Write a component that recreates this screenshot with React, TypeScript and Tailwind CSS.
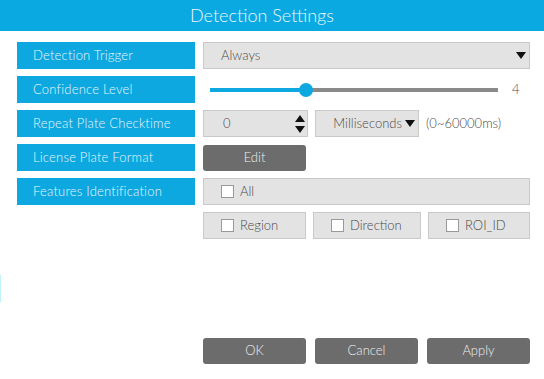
import React from "react";

const FONT = { fontFamily: '"Lato", "DejaVu Sans", sans-serif' };

function Label({ children }: { children: React.ReactNode }) {
  return (
    <div className="flex h-[27px] w-[178px] shrink-0 items-center bg-[#0ea8e0] pl-[16px] pt-[1px] text-[13px] font-light tracking-[0.2px] text-[#e6f6fc]">
      {children}
    </div>
  );
}

function Box({ className = "", children }: { className?: string; children?: React.ReactNode }) {
  return (
    <div
      className={
        "flex h-[27px] items-center border border-[#c9c9c9] bg-[#e3e3e3] text-[13px] font-light text-[#4a4a4a] " + className
      }
    >
      {children}
    </div>
  );
}

function Check({ label }: { label: string }) {
  return (
    <>
      <span className="ml-[17px] mr-[6px] inline-block h-[13px] w-[13px] border border-[#999] bg-white" />
      <span>{label}</span>
    </>
  );
}

function Tri({ up = false }: { up?: boolean }) {
  return (
    <svg width="10" height="7" viewBox="0 0 10 7">
      <path d={up ? "M0 7 L5 0 L10 7 Z" : "M0 0 L10 0 L5 7 Z"} fill="#111" />
    </svg>
  );
}

function DarkButton({ children, className = "" }: { children: React.ReactNode; className?: string }) {
  return (
    <button
      className={
        "flex h-[26px] w-[103px] items-center justify-center rounded-[3px] bg-[#6c6c6c] text-[13px] font-light text-[#ececec] " +
        className
      }
    >
      {children}
    </button>
  );
}

export default function App() {
  return (
    <div className="relative h-[379px] w-[544px] overflow-hidden bg-white" style={FONT}>
      <div className="flex h-[31px] items-center justify-center bg-[#0ba9e1] pr-[20px] text-[18px] font-light text-[#eaf8fd]">
        Detection Settings
      </div>

      <div className="flex flex-col gap-[7px] pl-[17px] pt-[11px]">
        <div className="flex gap-[8px]">
          <Label>Detection Trigger</Label>
          <Box className="w-[327px] justify-between pl-[17px] pr-[3px]">
            <span>Always</span>
            <Tri />
          </Box>
        </div>

        <div className="flex gap-[8px]">
          <Label>Confidence Level</Label>
          <div className="flex h-[27px] items-center pl-[7px]">
            <div className="relative flex h-[4px] w-[288px]">
              <div className="h-full w-[96px] bg-[#0ea8e0]" />
              <div className="h-full flex-1 bg-[#8a8a8a]" />
              <span className="absolute left-[89px] top-[-5px] h-[14px] w-[14px] rounded-full bg-[#0ea8e0]" />
            </div>
            <span className="ml-[14px] text-[13px] font-light text-[#4a4a4a]">4</span>
          </div>
        </div>

        <div className="flex gap-[8px]">
          <Label>Repeat Plate Checktime</Label>
          <Box className="w-[105px] justify-between pl-[19px] pr-[2px]">
            <span>0</span>
            <div className="flex flex-col gap-[4px]">
              <Tri up />
              <Tri />
            </div>
          </Box>
          <Box className="ml-[-1px] w-[104px] justify-end pr-[3px]">
            <span className="mr-[3px]">Milliseconds</span>
            <Tri />
          </Box>
          <span className="ml-[-1px] flex items-center text-[13px] font-light text-[#4a4a4a]">(0~60000ms)</span>
        </div>

        <div className="flex gap-[8px]">
          <Label>License Plate Format</Label>
          <div className="flex items-center">
            <DarkButton className="h-[25px]">Edit</DarkButton>
          </div>
        </div>

        <div className="flex gap-[8px]">
          <Label>Features Identification</Label>
          <Box className="w-[327px]">
            <Check label="All" />
          </Box>
        </div>

        <div className="flex gap-[7px] pl-[186px]">
          <Box className="w-[103px]">
            <Check label="Region" />
          </Box>
          <Box className="w-[108px]">
            <Check label="Direction" />
          </Box>
          <Box className="w-[102px]">
            <Check label="ROI_ID" />
          </Box>
        </div>
      </div>

      <div className="mt-[99px] flex gap-[9px] pl-[203px]">
        <DarkButton>OK</DarkButton>
        <DarkButton>Cancel</DarkButton>
        <DarkButton>Apply</DarkButton>
      </div>

      <span className="absolute left-0 top-[275px] h-[27px] w-[1px] bg-[#bff3f7]" />
    </div>
  );
}
